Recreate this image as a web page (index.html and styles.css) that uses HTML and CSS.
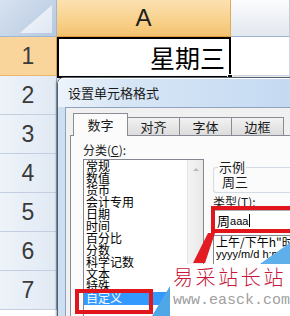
FILE: index.html
```html
<!DOCTYPE html>
<html>
<head>
<meta charset="utf-8">
<link rel="stylesheet" href="styles.css">
</head>
<body>
<div class="sheet">
  <div class="corner"></div>
  <div class="colhdr sel">A</div>
  <div class="colhdr"></div>
  <div class="rowhdr sel">1</div><div class="cell a1">星期三<span class="handle"></span></div><div class="cell"></div>
  <div class="rowhdr">2</div><div class="cell"></div><div class="cell"></div>
  <div class="rowhdr">3</div><div class="cell"></div><div class="cell"></div>
  <div class="rowhdr">4</div><div class="cell"></div><div class="cell"></div>
  <div class="rowhdr">5</div><div class="cell"></div><div class="cell"></div>
  <div class="rowhdr">6</div><div class="cell"></div><div class="cell"></div>
  <div class="rowhdr">7</div><div class="cell"></div><div class="cell"></div>
</div>

<div class="dialog">
  <div class="dtitle">设置单元格格式</div>
  <div class="client">
    <div class="tabs">
      <div class="tab active">数字</div>
      <div class="tab">对齐</div>
      <div class="tab">字体</div>
      <div class="tab">边框</div>
    </div>
    <div class="panel">
      <div class="leftcol">
        <div class="lbl">分类(<u>C</u>):</div>
        <div class="catlist">
          <ul class="items">
            <li>常规</li>
            <li>数值</li>
            <li>货币</li>
            <li>会计专用</li>
            <li>日期</li>
            <li>时间</li>
            <li>百分比</li>
            <li>分数</li>
            <li>科学记数</li>
            <li>文本</li>
            <li>特殊</li>
            <li class="selitem">自定义</li>
          </ul>
          <div class="vscroll"><span class="arrow"></span></div>
        </div>
      </div>
      <div class="rightcol">
        <fieldset class="sample"><legend>示例</legend><div class="sampletext">周三</div></fieldset>
        <div class="lbl2">类型(<u>T</u>):</div>
        <div class="typebox">周<span class="lat">aaa</span><span class="caret"></span></div>
        <div class="typelist">
          <div>上午/下午h"时"</div>
          <div class="lat">yyyy/m/d h:mm</div>
        </div>
      </div>
    </div>
  </div>
</div>

<div class="mark mark-cat"></div>
<div class="mark mark-type"></div>
<svg class="wedge" width="30" height="40" viewBox="0 0 30 40"><polygon points="15,0 22,0 12,30 0,30" fill="#e31b23"/></svg>
<svg class="tri-top" width="34" height="24" viewBox="0 0 34 24"><polygon points="0,24 34,0 34,24" fill="#5fb0ea"/></svg>

<div class="watermark">
  <svg class="tri-left" width="18" height="30" viewBox="0 0 18 30"><polygon points="0,30 18,0 18,30" fill="#4fa7e6"/></svg>
  <div class="wm-box">
    <div class="wm-cn">易采站长站</div>
    <div class="wm-url">www.easck.com</div>
  </div>
</div>
</body>
</html>
```

FILE: styles.css
```css
* { box-sizing: border-box; margin: 0; padding: 0; }
html, body { width: 290px; height: 316px; overflow: hidden; background: #fff; }
body { position: relative; font-family: "Noto Sans CJK SC", sans-serif; }

/* ---------- sheet ---------- */
.sheet {
  display: grid;
  grid-template-columns: 57px 174px 59px;
  grid-template-rows: 37px repeat(7, 39px);
}
.corner {
  position: relative;
  background: linear-gradient(135deg, #d7e2f0, #b6c9e1);
  border-right: 1px solid #9eb6ce;
  border-bottom: 1px solid #9eb6ce;
}
.corner::after {
  content: "";
  position: absolute;
  left: 20px; top: 5px; width: 32px; height: 28px;
  background: linear-gradient(135deg, #f7f9fc, #dfe7f2);
  clip-path: polygon(100% 0, 100% 100%, 0 100%);
}
.colhdr {
  display: flex; align-items: center; justify-content: center;
  font: 24px "Liberation Sans", sans-serif; color: #1e1e1e;
  background: linear-gradient(#fbfcfd, #e2e7ee);
  border-right: 1px solid #c5ccd6;
  border-bottom: 1px solid #9eb6ce;
}
.colhdr.sel {
  background: linear-gradient(#fbe1b0, #f8d08a 60%, #f3c270);
  border-right: 1px solid #e2a85a;
  border-bottom: 1px solid #e09a3e;
}
.rowhdr {
  display: flex; align-items: center; justify-content: center;
  font: 23px "Liberation Sans", sans-serif; color: #3a3a3a;
  background: linear-gradient(90deg, #eef3f9, #e1e9f4);
  border-right: 1px solid #9eb6ce;
  border-bottom: 1px solid #c3cfdf;
}
.rowhdr.sel {
  background: #f9d59c;
  border-right: 1px solid #e09a3e;
  border-bottom: 1px solid #e9b76a;
}
.cell {
  border-right: 1px solid #d0d7e5;
  border-bottom: 1px solid #d0d7e5;
}
.a1 {
  position: relative;
  border: 2px solid #000;
  height: 41px;
  display: flex; align-items: center; justify-content: flex-end;
  padding-right: 4px;
  font-size: 25px; color: #000; line-height: 1;
}
.handle {
  position: absolute; right: -4px; bottom: -4px;
  width: 6px; height: 6px; background: #000; border: 1px solid #fff;
}

/* ---------- dialog ---------- */
.dialog {
  position: absolute; left: 57px; top: 77px;
  width: 262px; height: 262px;
  display: flex; flex-direction: column;
  border: 1px solid #55606e;
  border-radius: 7px 7px 0 0;
  background: linear-gradient(90deg, #cddff2, #bfd5ef);
  padding: 0 0 0 7px;
  box-shadow: -1px 0 2px rgba(0,0,0,.35);
}
.dtitle {
  height: 29px; flex: none;
  display: flex; align-items: center;
  margin-left: -7px; padding-left: 10px;
  border-radius: 6px 6px 0 0;
  background: linear-gradient(90deg, #edf3fb 0, #d8e6f6 60px, #c1d8f1 100%);
  box-shadow: inset 0 1px 0 #fff;
  font-size: 13px; color: #1a1a1a;
}
.client {
  flex: 1;
  display: flex; flex-direction: column;
  background: #f0f0f0;
  border: 1px solid #8ea3bf;
  padding: 5px 0 0 4px;
}
.tabs {
  display: flex; align-items: flex-end;
  height: 22px; padding-left: 3px;
  position: relative; z-index: 1;
}
.tab {
  width: 53px; height: 18px;
  display: flex; align-items: center; justify-content: center;
  font-size: 13px; color: #1a1a1a;
  background: linear-gradient(#f2f2f2, #dcdcdc);
  border: 1px solid #898c95; border-bottom: none;
  margin-left: -1px;
}
.tab.active {
  width: 55px; height: 23px; margin-bottom: -1px; margin-left: 0;
  background: #fbfbfb;
  padding-bottom: 2px;
}
.panel {
  flex: 1;
  display: flex; gap: 9px;
  background: #fbfbfb;
  border: 1px solid #898c95;
  border-right: none; border-bottom: none;
  padding: 7px 0 0 12px;
}
.leftcol { width: 121px; display: flex; flex-direction: column; }
.lbl { height: 16px; font-size: 12px; line-height: 14px; color: #1a1a1a; }
.catlist {
  flex: 1; display: flex;
  background: #fff;
  border: 1px solid #828790; border-bottom: none;
}
.items { list-style: none; flex: 1; }
.items li {
  font-size: 12px; line-height: 12px; height: 12px;
  padding-left: 2px; color: #000; white-space: nowrap;
}
.items li.selitem { background: #3399ff; color: #fff; height: 13px; margin-right: 1px; }
.vscroll {
  width: 16px; background: linear-gradient(90deg, #f4f4f4, #e8e8e8);
  border-left: 1px solid #e4e4e4;
  display: flex; justify-content: center; padding-top: 8px;
}
.arrow {
  width: 0; height: 0;
  border-left: 3px solid transparent; border-right: 3px solid transparent;
  border-bottom: 3px solid #b9b9b9;
}
.rightcol { flex: 1; padding-top: 17px; display: flex; flex-direction: column; }
.sample {
  border: 1px solid #d5dbe2; border-radius: 3px; border-right: none;
  padding: 0 0 2px 8px;
}
.sample legend {
  font-size: 13px; line-height: 14px; padding: 0 1px; margin-left: -4px; color: #1a1a1a;
}
.sampletext { font-size: 13px; line-height: 16px; color: #1a1a1a; }
.lbl2 { margin-top: 2px; font-size: 12px; line-height: 14px; color: #1a1a1a; }
.typebox {
  margin-top: 1px; height: 21px;
  background: #fff; border: 1px solid #abadb3; border-right: none;
  display: flex; align-items: center; padding-left: 3px;
  font-size: 13px; color: #000;
}
.lat { font-family: "Liberation Sans", sans-serif; font-size: 11px; }
.caret { width: 1px; height: 13px; background: #000; margin-left: 1px; }
.typelist {
  margin-top: 4px; flex: 1;
  background: #fff; border: 1px solid #828790; border-right: none;
  padding-left: 2px;
  font-size: 12px; line-height: 12px; color: #000; white-space: nowrap;
}

/* ---------- annotations ---------- */
.mark { position: absolute; border: 4px solid #e1161d; }
.mark-cat { left: 75px; top: 289px; width: 78px; height: 25px; }
.mark-type { left: 211px; top: 206px; width: 100px; height: 27px; }
.wedge { position: absolute; left: 193px; top: 233px; }
.tri-top { position: absolute; left: 257px; top: 242px; }

.watermark {
  position: absolute; left: 152px; top: 264px; right: 0; bottom: 0;
  display: flex; align-items: flex-end;
}
.tri-left { flex: none; }
.wm-box {
  flex: 1; align-self: stretch;
  background: #fff;
  padding: 0 0 0 3px;
  display: flex; flex-direction: column;
}
.wm-cn {
  font-size: 20px; line-height: 24px; height: 25px;
  letter-spacing: 2.6px; color: #c8173a; font-weight: 300;
  white-space: nowrap; padding-top: 1px;
}
.wm-url {
  margin-top: 4px;
  font: 15px/16px "Liberation Mono", monospace; color: #a0a0a0;
  white-space: nowrap;
}
```
